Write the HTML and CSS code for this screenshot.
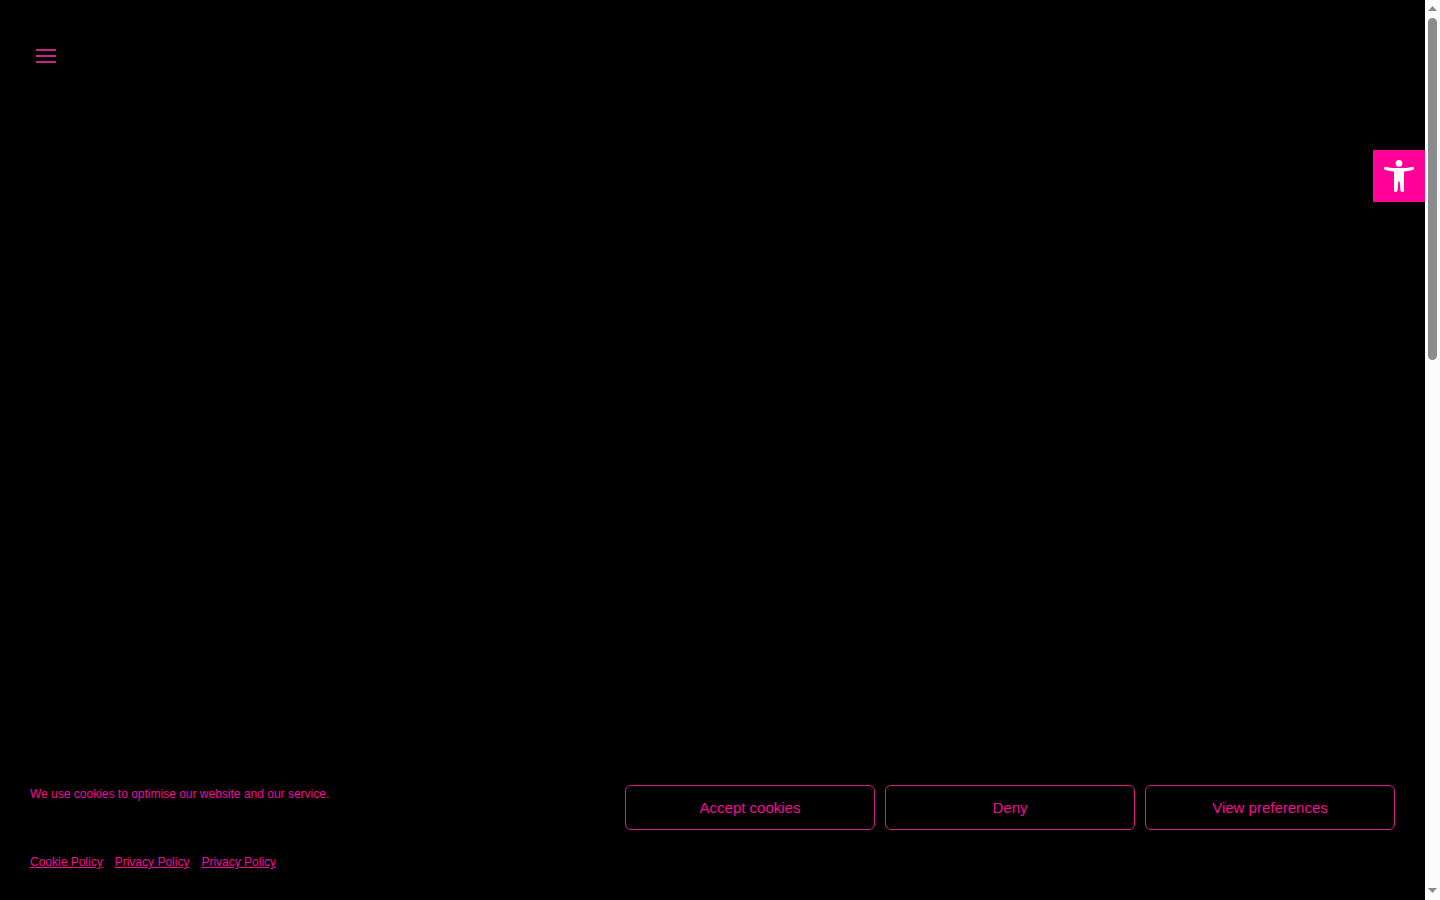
FILE: index.html
```html
<!DOCTYPE html>
<html lang="en">
<head>
  <meta charset="UTF-8">
  <meta name="viewport" content="width=device-width, initial-scale=1.0">
  <title>Home</title>
  <link rel="stylesheet" href="styles.css">
</head>
<body>
  <div class="window">
    <div class="page">
      <header class="header">
        <button class="menu-toggle" type="button" aria-label="Menu">
          <svg width="20" height="14" viewBox="0 0 20 14" fill="#c9238a">
            <rect y="0" width="20" height="2"/>
            <rect y="6" width="20" height="2"/>
            <rect y="12" width="20" height="2"/>
          </svg>
        </button>
      </header>

      <main class="main">
        <a class="accessibility" href="#" aria-label="Open toolbar">
          <svg width="30" height="32" viewBox="0 0 30 32" fill="#fff">
            <circle cx="15" cy="3.4" r="3.3"/>
            <path d="M1.8 6.900C6 7.700 10 8.100 15 8.100s9-.4 13.200-1.200c1-.2 1.800.5 1.800 1.400 0 .8-.5 1.500-1.300 1.700-2.900.7-5.700 1.200-8.700 1.500V30.200c0 1-.7 1.800-1.700 1.800s-1.800-.7-1.900-1.700l-.7-8.800h-1.400l-.7 8.800c-.1 1-.9 1.700-1.900 1.700S10 31.200 10 30.200V11.500C7 11.200 4.200 10.700 1.300 10 .5 9.800 0 9.100 0 8.300c0-.9.8-1.600 1.800-1.400z"/>
          </svg>
        </a>
      </main>

      <section class="cookie-banner" aria-label="Cookie consent">
        <div class="cookie-body">
          <p class="cookie-message">We use cookies to optimise our website and our service.</p>
          <div class="cookie-buttons">
            <button class="btn" type="button">Accept cookies</button>
            <button class="btn" type="button">Deny</button>
            <button class="btn" type="button">View preferences</button>
          </div>
        </div>
        <nav class="cookie-links">
          <a href="#">Cookie Policy</a>
          <a href="#">Privacy Policy</a>
          <a href="#">Privacy Policy</a>
        </nav>
      </section>
    </div>

    <div class="scrollbar" aria-hidden="true">
      <svg width="9" height="5" viewBox="0 0 9 5" fill="#8b8b8b"><path d="M4.500 0 9 5H0z"/></svg>
      <div class="scroll-track">
        <div class="scroll-thumb"></div>
      </div>
      <svg width="9" height="5" viewBox="0 0 9 5" fill="#8b8b8b"><path d="M0 0h9L4.500 5z"/></svg>
    </div>
  </div>
</body>
</html>
```
FILE: styles.css
```css
* {
  box-sizing: border-box;
}
body {
  margin: 0;
  background: #000;
  color: #f50a96;
  font-family: "Liberation Sans", Arial, sans-serif;
  font-size: 12px;
}
.window {
  display: flex;
  min-height: 100vh;
}
.page {
  flex: 1;
  display: flex;
  flex-direction: column;
}

/* Header */
.header {
  padding: 36px 26px;
}
.menu-toggle {
  display: flex;
  align-items: center;
  justify-content: center;
  width: 40px;
  height: 40px;
  padding: 0;
  border: 0;
  background: none;
  cursor: pointer;
}

/* Main */
.main {
  flex: 1;
  display: flex;
  flex-direction: column;
  align-items: flex-end;
  padding-top: 38px;
}
.accessibility {
  display: flex;
  align-items: center;
  justify-content: center;
  width: 52px;
  height: 52px;
  background: #ff0099;
}

/* Cookie banner */
.cookie-banner {
  padding: 20px 30px 29px;
}
.cookie-body {
  display: flex;
  justify-content: space-between;
  gap: 20px;
}
.cookie-message {
  margin: 0;
  line-height: 18px;
}
.cookie-buttons {
  display: flex;
  gap: 10px;
}
.btn {
  width: 250px;
  height: 45px;
  padding: 0 10px;
  border: 1px solid #d81e8a;
  border-radius: 6px;
  background: #000;
  color: #f50a96;
  font-family: inherit;
  font-size: 15px;
  cursor: pointer;
}
.cookie-links {
  display: flex;
  gap: 12px;
  margin-top: 23px;
  line-height: 18px;
}
.cookie-links a {
  color: #f50a96;
  text-decoration: underline;
}

/* Scrollbar */
.scrollbar {
  display: flex;
  flex-direction: column;
  align-items: center;
  gap: 7px;
  width: 15px;
  padding: 6px 0 7px;
  background: #fcfcfc;
}
.scroll-track {
  flex: 1;
}
.scroll-thumb {
  width: 9px;
  height: 38vh;
  border-radius: 5px;
  background: #8b8b8b;
}
```
